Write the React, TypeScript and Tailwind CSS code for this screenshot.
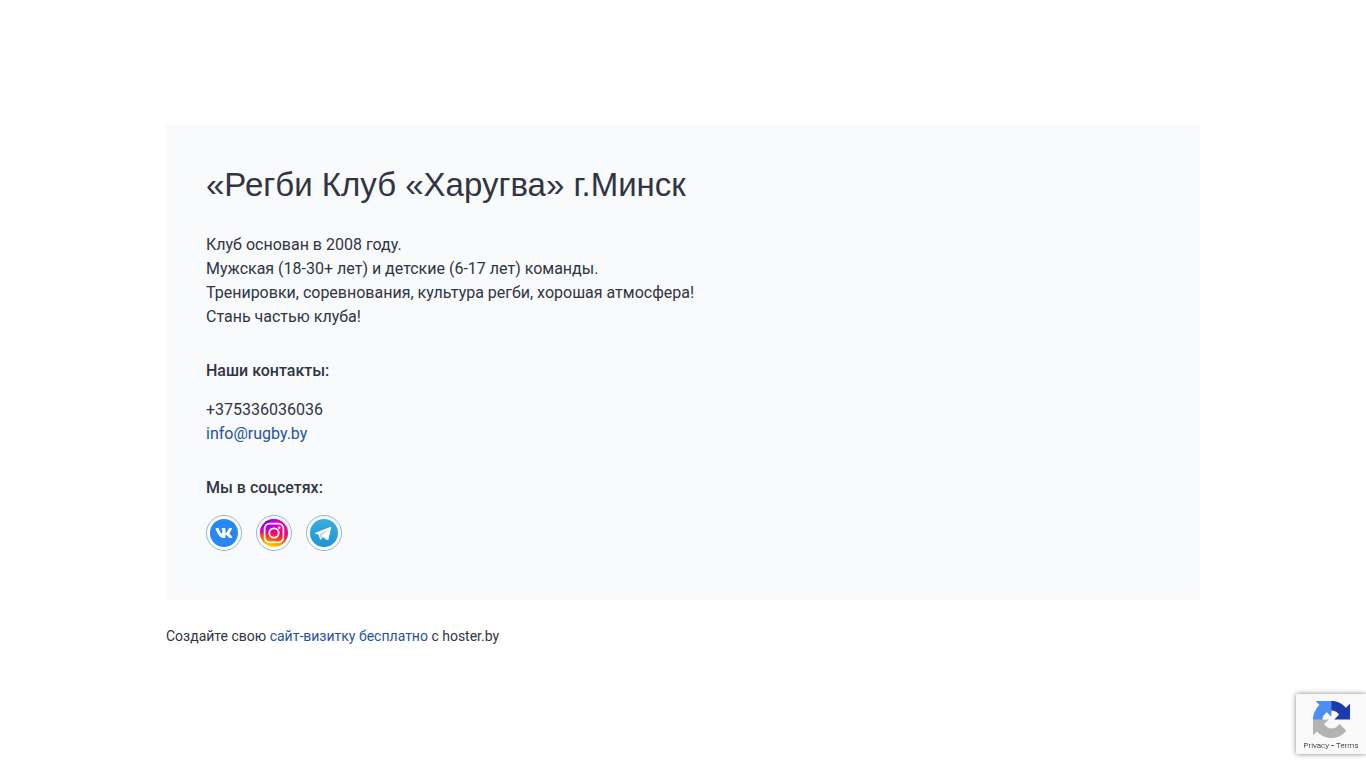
import React from 'react';
import { FaVk } from 'react-icons/fa';

const socialClass =
  'flex h-9 w-9 items-center justify-center rounded-full border border-[#8fb4dc] bg-white';

function VkIcon() {
  return (
    <span className="flex h-7 w-7 items-center justify-center rounded-full bg-[#2787f5] text-white">
      <FaVk className="h-[18px] w-[18px]" />
    </span>
  );
}

function InstagramIcon() {
  return (
    <svg viewBox="0 0 28 28" className="h-7 w-7" fill="none">
      <defs>
        <linearGradient id="ig-base" x1="17" y1="1" x2="11" y2="27" gradientUnits="userSpaceOnUse">
          <stop offset="0" stopColor="#e600b8" />
          <stop offset="0.5" stopColor="#ff0069" />
          <stop offset="0.75" stopColor="#ff5a00" />
          <stop offset="1" stopColor="#ffd600" />
        </linearGradient>
        <radialGradient id="ig-violet" cx="6" cy="2" r="15" gradientUnits="userSpaceOnUse">
          <stop offset="0" stopColor="#8a00f5" />
          <stop offset="0.5" stopColor="#b400ee" />
          <stop offset="1" stopColor="#d300c5" stopOpacity="0" />
        </radialGradient>
      </defs>
      <circle cx="14" cy="14" r="14" fill="url(#ig-base)" />
      <circle cx="14" cy="14" r="14" fill="url(#ig-violet)" />
      <rect x="4.6" y="4.6" width="18.8" height="18.8" rx="5" stroke="#fff" strokeWidth="1.7" />
      <circle cx="14" cy="14" r="4.7" stroke="#fff" strokeWidth="1.8" />
      <circle cx="19.3" cy="8.7" r="1.2" fill="#fff" />
    </svg>
  );
}

function TelegramIcon() {
  return (
    <svg viewBox="0 0 28 28" className="h-7 w-7">
      <defs>
        <linearGradient id="tg-base" x1="0" y1="0" x2="0" y2="1">
          <stop offset="0" stopColor="#38aee0" />
          <stop offset="1" stopColor="#1e93d2" />
        </linearGradient>
      </defs>
      <circle cx="14" cy="14" r="14" fill="url(#tg-base)" />
      <path d="M5.5 13.7 20.2 8c.5-.2 1 .1.9.8l-2.6 11.5c-.2.9-.8 1-1.5.6l-3.9-2.7-2 2c-.5.5-1.1.3-1.2-.3l-1.2-4.1-3.2-1.1c-.6-.2-.6-.6 0-1z" fill="#fff" />
      <path d="m9.6 15.4 8.8-5.4c.4-.2.7 0 .4.2l-7.1 6.7-.5 3.2c-.3 0-.4-.3-.5-.5z" fill="#c8daea" />
      <path d="m11.7 17 1.8 1.2-1.7 1.8c-.2.2-.4.2-.7.1z" fill="#a9c9dd" />
    </svg>
  );
}

function RecaptchaLogo() {
  return (
    <svg viewBox="0 0 64 64" className="h-[37px] w-[37px]">
      <path d="M64 31.955l-.033-1.37V4.687l-7.16 7.16C50.948 4.674 42.033.093 32.05.093c-10.4 0-19.622 4.96-25.458 12.64l11.736 11.86a15.55 15.55 0 0 1 4.754-5.334c2.05-1.6 4.952-2.906 8.968-2.906.485 0 .86.057 1.135.163 4.976.393 9.288 3.14 11.828 7.124l-8.307 8.307L64 31.953" fill="#1c3aa9" />
      <path d="M31.862.094l-1.37.033H4.594l7.16 7.16C4.58 13.147 0 22.06 0 32.046c0 10.4 4.96 19.622 12.64 25.458L24.5 45.768a15.55 15.55 0 0 1-5.334-4.754c-1.6-2.05-2.906-4.952-2.906-8.968 0-.485.057-.86.163-1.135.393-4.976 3.14-9.288 7.124-11.828l8.307 8.307L31.86.095" fill="#4a8ff5" />
      <path d="M.001 32.045l.033 1.37v25.898l7.16-7.16c5.86 7.173 14.774 11.754 24.76 11.754 10.4 0 19.622-4.96 25.458-12.64l-11.736-11.86a15.55 15.55 0 0 1-4.754 5.334c-2.05 1.6-4.952 2.906-8.968 2.906-.485 0-.86-.057-1.135-.163-4.976-.393-9.288-3.14-11.828-7.124l8.307-8.307c-10.522.04-22.4.066-27.295-.005" fill="#b3b3b3" />
    </svg>
  );
}

function App() {
  return (
    <div className="flex min-h-screen flex-col justify-center bg-white font-['Roboto',sans-serif] text-base text-[#313543]">
      <div className="mx-auto w-full max-w-[1066px] px-4 pt-[3px]">
        <main className="bg-[#f8fafc] px-10 pt-10 pb-[49px]">
          <h1 className="font-['Liberation_Sans',sans-serif] text-[33px] leading-10 text-[#313543]">
            «Регби Клуб «Харугва» г.Минск
          </h1>

          <p className="mt-7">
            Клуб основан в 2008 году.
            <br />
            Мужская (18-30+ лет) и детские (6-17 лет) команды.
            <br />
            Тренировки, соревнования, культура регби, хорошая атмосфера!
            <br />
            Стань частью клуба!
          </p>

          <h2 className="mt-[30px] font-medium">Наши контакты:</h2>
          <p className="mt-[15px]">
            +375336036036
            <br />
            <a href="mailto:info@rugby.by" className="text-[#1f52a5]">info@rugby.by</a>
          </p>

          <h2 className="mt-[30px] font-medium">Мы в соцсетях:</h2>
          <div className="mt-[15px] flex gap-[14px]">
            <a href="#vk" aria-label="VK" className={socialClass}>
              <VkIcon />
            </a>
            <a href="#instagram" aria-label="Instagram" className={socialClass}>
              <InstagramIcon />
            </a>
            <a href="#telegram" aria-label="Telegram" className={socialClass}>
              <TelegramIcon />
            </a>
          </div>
        </main>

        <footer className="mt-[26px] text-sm">
          Создайте свою <a href="#hoster" className="text-[#1f52a5]">сайт-визитку бесплатно</a> с hoster.by
        </footer>
      </div>

      {/* reCAPTCHA badge */}
      <div className="fixed right-0 bottom-[14px] flex h-[60px] w-[70px] flex-col items-center rounded-l-xs bg-[#f9f9f9] pt-[7px] shadow-[0_0_5px_gray]">
        <RecaptchaLogo />
        <div className="mt-[3px] text-[8px] leading-[10px] font-light whitespace-nowrap text-black">
          <a href="#privacy">Privacy</a>
          <span className="font-bold"> - </span>
          <a href="#terms">Terms</a>
        </div>
      </div>
    </div>
  );
}

export default App;
